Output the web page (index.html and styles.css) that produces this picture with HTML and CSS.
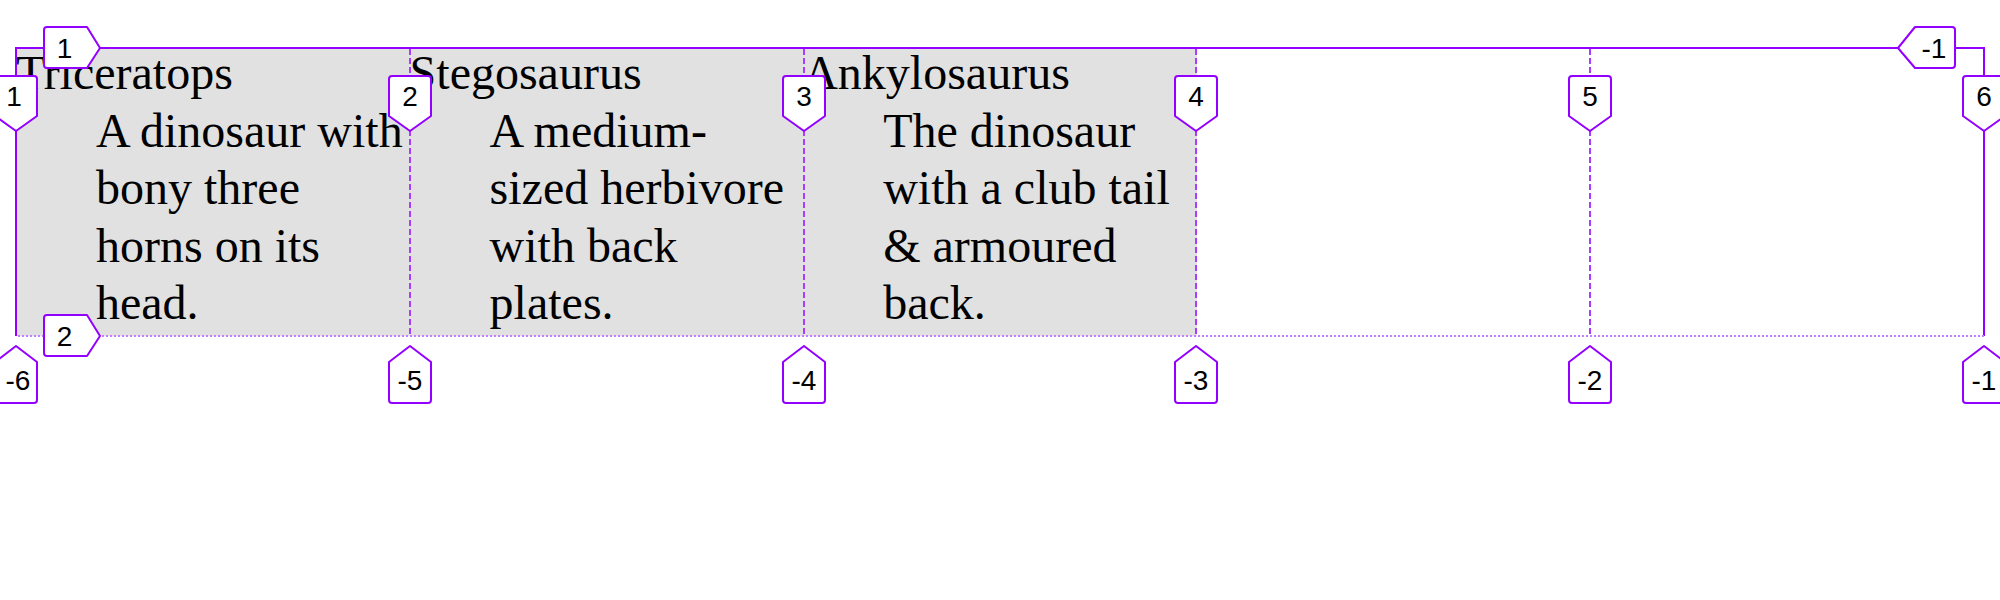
FILE: index.html
```html
<!DOCTYPE html>
<html lang="en">
<head>
<meta charset="utf-8">
<title>Dinosaurs grid</title>
<link rel="stylesheet" href="styles.css">
</head>
<body>
<dl class="dinos">
  <div class="entry">
    <dt>Triceratops</dt>
    <dd>A dinosaur with bony three horns on its head.</dd>
  </div>
  <div class="entry">
    <dt>Stegosaurus</dt>
    <dd>A medium-sized herbivore with back plates.</dd>
  </div>
  <div class="entry">
    <dt>Ankylosaurus</dt>
    <dd>The dinosaur with a club tail &amp; armoured back.</dd>
  </div>
</dl>

<svg class="grid-overlay" width="2000" height="600" viewBox="0 0 2000 600" xmlns="http://www.w3.org/2000/svg">
  <g class="lines">
    <line class="solid" x1="16" y1="48" x2="1984" y2="48"/>
    <line class="solid" x1="16" y1="47" x2="16" y2="336"/>
    <line class="solid" x1="1984" y1="47" x2="1984" y2="336"/>
    <line class="dotted" x1="18" y1="336" x2="1984" y2="336"/>
    <line class="dashed" x1="410" y1="49" x2="410" y2="335"/>
    <line class="dashed" x1="804" y1="49" x2="804" y2="335"/>
    <line class="dashed" x1="1196" y1="49" x2="1196" y2="335"/>
    <line class="dashed" x1="1590" y1="49" x2="1590" y2="335"/>
  </g>

  <g class="labels">
    <!-- row labels -->
    <path d="M47,27 L87,27 L100,48 L87,68 L47,68 Q44,68 44,65 L44,30 Q44,27 47,27 Z"/>
    <text x="64.5" y="58">1</text>
    <path d="M47,315 L87,315 L100,336 L87,356 L47,356 Q44,356 44,353 L44,318 Q44,315 47,315 Z"/>
    <text x="64.5" y="346">2</text>
    <path d="M1898,48 L1915,27 L1952,27 Q1955,27 1955,30 L1955,65 Q1955,68 1952,68 L1915,68 Z"/>
    <text x="1934" y="58">-1</text>

    <!-- top column labels -->
    <path d="M-5,79 Q-5,76 -2,76 L34,76 Q37,76 37,79 L37,116 L16,131 L-5,116 Z"/>
    <text x="14" y="106">1</text>
    <path d="M389,79 Q389,76 392,76 L428,76 Q431,76 431,79 L431,116 L410,131 L389,116 Z"/>
    <text x="410" y="106">2</text>
    <path d="M783,79 Q783,76 786,76 L822,76 Q825,76 825,79 L825,116 L804,131 L783,116 Z"/>
    <text x="804" y="106">3</text>
    <path d="M1175,79 Q1175,76 1178,76 L1214,76 Q1217,76 1217,79 L1217,116 L1196,131 L1175,116 Z"/>
    <text x="1196" y="106">4</text>
    <path d="M1569,79 Q1569,76 1572,76 L1608,76 Q1611,76 1611,79 L1611,116 L1590,131 L1569,116 Z"/>
    <text x="1590" y="106">5</text>
    <path d="M1963,79 Q1963,76 1966,76 L2002,76 Q2005,76 2005,79 L2005,116 L1984,131 L1963,116 Z"/>
    <text x="1984" y="106">6</text>

    <!-- bottom column labels -->
    <path d="M16,346 L37,362 L37,400 Q37,403 34,403 L-2,403 Q-5,403 -5,400 L-5,362 Z"/>
    <text x="18" y="390">-6</text>
    <path d="M410,346 L431,362 L431,400 Q431,403 428,403 L392,403 Q389,403 389,400 L389,362 Z"/>
    <text x="410" y="390">-5</text>
    <path d="M804,346 L825,362 L825,400 Q825,403 822,403 L786,403 Q783,403 783,400 L783,362 Z"/>
    <text x="804" y="390">-4</text>
    <path d="M1196,346 L1217,362 L1217,400 Q1217,403 1214,403 L1178,403 Q1175,403 1175,400 L1175,362 Z"/>
    <text x="1196" y="390">-3</text>
    <path d="M1590,346 L1611,362 L1611,400 Q1611,403 1608,403 L1572,403 Q1569,403 1569,400 L1569,362 Z"/>
    <text x="1590" y="390">-2</text>
    <path d="M1984,346 L2005,362 L2005,400 Q2005,403 2002,403 L1966,403 Q1963,403 1963,400 L1963,362 Z"/>
    <text x="1984" y="390">-1</text>
  </g>
</svg>
</body>
</html>
```

FILE: styles.css
```css
html, body {
  background: #ffffff;
}

body {
  margin: 48px 16px;
  font-family: "Liberation Serif", "Times New Roman", serif;
  color: #000000;
}

.dinos {
  display: grid;
  grid-template-columns: repeat(5, 1fr);
  margin: 0;
  font-size: 48px;
  line-height: 57.6px;
}

.entry {
  background: #e1e1e1;
  padding-bottom: 4px;
}

.entry dt {
  margin: -4px 0 0 0;
}

.entry dd {
  margin: 0 0 0 80px;
}

.grid-overlay {
  position: absolute;
  top: 0;
  left: 0;
  overflow: visible;
  pointer-events: none;
}

.lines line {
  stroke-width: 2;
  fill: none;
}

.lines .solid {
  stroke: #9400ff;
}

.lines .dashed {
  stroke: #a93dff;
  stroke-dasharray: 6 3;
}

.lines .dotted {
  stroke: #c47dff;
  stroke-dasharray: 2 2;
}

.labels path {
  fill: #ffffff;
  stroke: #9400ff;
  stroke-width: 2;
  stroke-linejoin: round;
}

.labels text {
  font-family: "Liberation Sans", Arial, sans-serif;
  font-size: 28px;
  fill: #000000;
  text-anchor: middle;
}
```
